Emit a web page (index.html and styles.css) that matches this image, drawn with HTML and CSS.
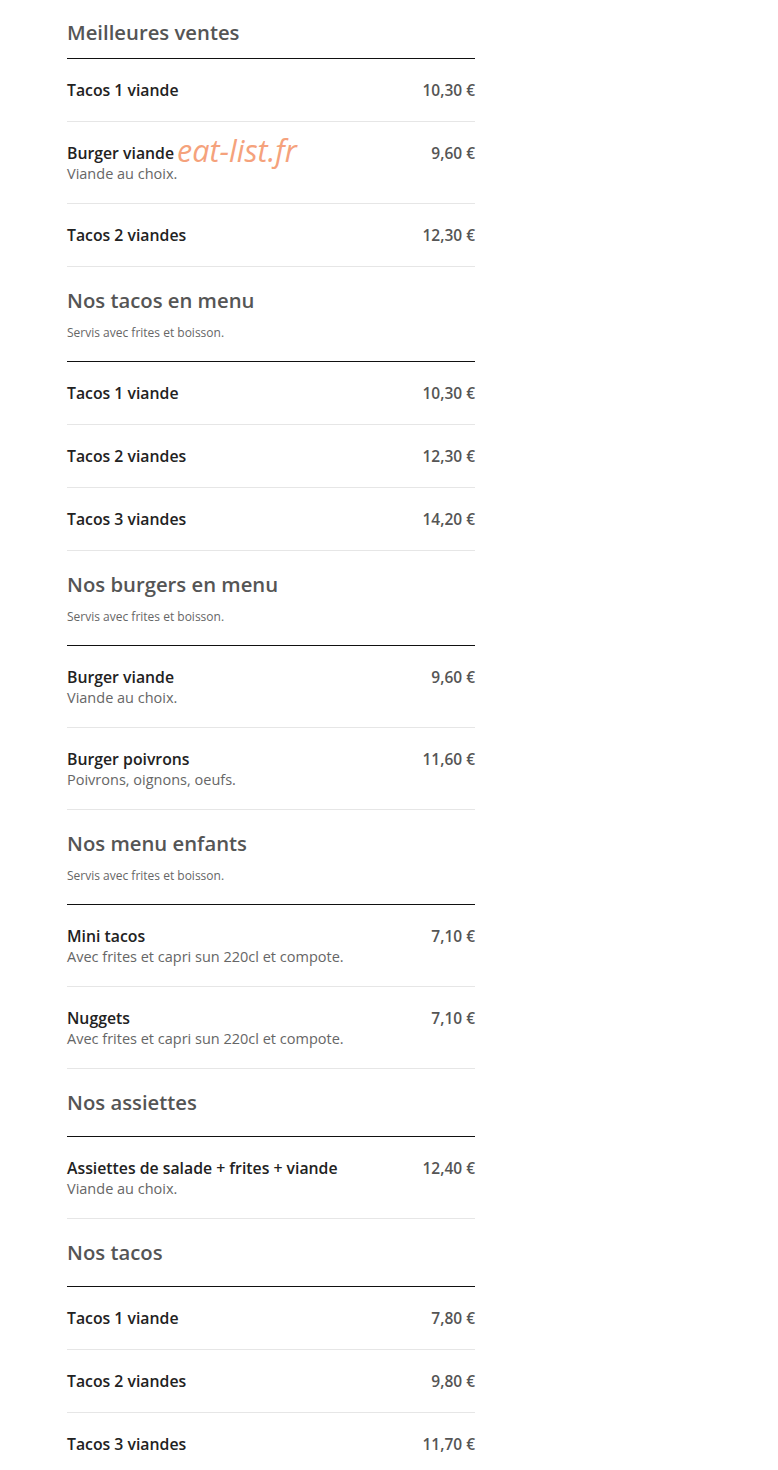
FILE: index.html
```html
<!DOCTYPE html>
<html lang="fr">
<head>
  <meta charset="UTF-8" />
  <meta name="viewport" content="width=device-width, initial-scale=1" />
  <title>Carte</title>
  <link rel="stylesheet" href="styles.css">
</head>
<body>
  <main class="menu">

    <section class="menu-section">
      <div class="menu-head menu-head--first">
        <h2>Meilleures ventes</h2>
      </div>
      <div class="item"><div class="item-info"><h3>Tacos 1 viande</h3></div><span class="price">10,30 €</span></div>
      <div class="item">
        <div class="item-info"><h3>Burger viande</h3><p>Viande au choix.</p></div>
        <span class="price">9,60 €</span>
        <span class="watermark">eat-list.fr</span>
      </div>
      <div class="item"><div class="item-info"><h3>Tacos 2 viandes</h3></div><span class="price">12,30 €</span></div>
    </section>

    <section class="menu-section">
      <div class="menu-head">
        <h2>Nos tacos en menu</h2>
        <p class="note">Servis avec frites et boisson.</p>
      </div>
      <div class="item"><div class="item-info"><h3>Tacos 1 viande</h3></div><span class="price">10,30 €</span></div>
      <div class="item"><div class="item-info"><h3>Tacos 2 viandes</h3></div><span class="price">12,30 €</span></div>
      <div class="item"><div class="item-info"><h3>Tacos 3 viandes</h3></div><span class="price">14,20 €</span></div>
    </section>

    <section class="menu-section">
      <div class="menu-head">
        <h2>Nos burgers en menu</h2>
        <p class="note">Servis avec frites et boisson.</p>
      </div>
      <div class="item"><div class="item-info"><h3>Burger viande</h3><p>Viande au choix.</p></div><span class="price">9,60 €</span></div>
      <div class="item"><div class="item-info"><h3>Burger poivrons</h3><p>Poivrons, oignons, oeufs.</p></div><span class="price">11,60 €</span></div>
    </section>

    <section class="menu-section">
      <div class="menu-head">
        <h2>Nos menu enfants</h2>
        <p class="note">Servis avec frites et boisson.</p>
      </div>
      <div class="item"><div class="item-info"><h3>Mini tacos</h3><p>Avec frites et capri sun 220cl et compote.</p></div><span class="price">7,10 €</span></div>
      <div class="item"><div class="item-info"><h3>Nuggets</h3><p>Avec frites et capri sun 220cl et compote.</p></div><span class="price">7,10 €</span></div>
    </section>

    <section class="menu-section">
      <div class="menu-head">
        <h2>Nos assiettes</h2>
      </div>
      <div class="item"><div class="item-info"><h3>Assiettes de salade + frites + viande</h3><p>Viande au choix.</p></div><span class="price">12,40 €</span></div>
    </section>

    <section class="menu-section">
      <div class="menu-head">
        <h2>Nos tacos</h2>
      </div>
      <div class="item"><div class="item-info"><h3>Tacos 1 viande</h3></div><span class="price">7,80 €</span></div>
      <div class="item"><div class="item-info"><h3>Tacos 2 viandes</h3></div><span class="price">9,80 €</span></div>
      <div class="item"><div class="item-info"><h3>Tacos 3 viandes</h3></div><span class="price">11,70 €</span></div>
    </section>

  </main>
</body>
</html>
```

FILE: styles.css
```css
* { box-sizing: border-box; }

body {
  margin: 0;
  font-family: 'Open Sans', 'Noto Sans', sans-serif;
  background: #fff;
  color: #222;
}

.menu {
  width: 408px;
  margin-left: 67px;
}

.menu-head {
  padding: 19px 0 20px;
  border-bottom: 1px solid #111;
}

.menu-head--first {
  padding: 18px 0 12px;
}

.menu-head h2 {
  margin: 0;
  font-size: 20.3px;
  line-height: 28px;
  font-weight: 600;
  color: #555;
}

.menu-head .note {
  margin: 11px 0 0;
  font-size: 12px;
  line-height: 16px;
  color: #666;
}

.item {
  position: relative;
  display: flex;
  justify-content: space-between;
  align-items: flex-start;
  padding: 20px 0;
  border-bottom: 1px solid #e6e6e6;
}

.item-info h3 {
  margin: 0;
  font-size: 15.8px;
  line-height: 22px;
  font-weight: 600;
  color: #222;
}

.item-info p {
  margin: 0;
  font-size: 14.5px;
  line-height: 19px;
  color: #666;
}

.price {
  font-size: 15.5px;
  line-height: 22px;
  font-weight: 600;
  color: #555;
}

.watermark {
  position: absolute;
  left: 110px;
  top: 11px;
  font-size: 30.5px;
  line-height: 34px;
  font-style: italic;
  color: #f5a27c;
}
```
